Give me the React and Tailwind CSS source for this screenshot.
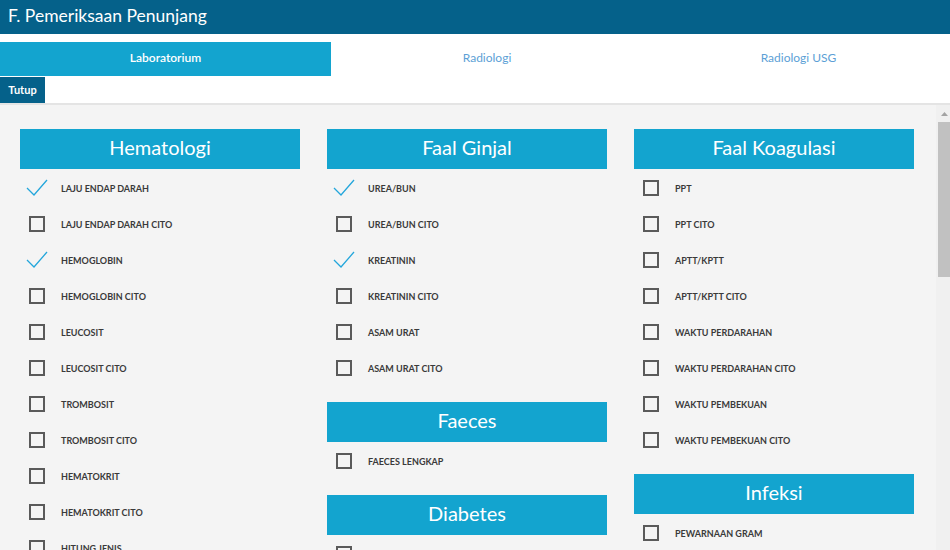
import React from 'react';

const columns = [
    [
        {
            title: 'Hematologi',
            items: [
                ['LAJU ENDAP DARAH', true],
                ['LAJU ENDAP DARAH CITO'],
                ['HEMOGLOBIN', true],
                ['HEMOGLOBIN CITO'],
                ['LEUCOSIT'],
                ['LEUCOSIT CITO'],
                ['TROMBOSIT'],
                ['TROMBOSIT CITO'],
                ['HEMATOKRIT'],
                ['HEMATOKRIT CITO'],
                ['HITUNG JENIS'],
                ['HITUNG JENIS CITO'],
                ['ERITROSIT'],
                ['ERITROSIT CITO'],
                ['GOLONGAN DARAH'],
                ['GOLONGAN DARAH CITO'],
            ],
        },
        {
            title: 'Urinalisa',
            items: [['URIN LENGKAP'], ['URIN LENGKAP CITO'], ['TES KEHAMILAN'], ['TES KEHAMILAN CITO']],
        },
        {
            title: 'Elektrolit',
            items: [['NATRIUM'], ['NATRIUM CITO'], ['KALIUM'], ['KALIUM CITO'], ['KLORIDA'], ['KLORIDA CITO'], ['KALSIUM']],
        },
    ],
    [
        {
            title: 'Faal Ginjal',
            items: [
                ['UREA/BUN', true],
                ['UREA/BUN CITO'],
                ['KREATININ', true],
                ['KREATININ CITO'],
                ['ASAM URAT'],
                ['ASAM URAT CITO'],
            ],
        },
        { title: 'Faeces', items: [['FAECES LENGKAP']] },
        {
            title: 'Diabetes',
            items: [['GULA DARAH SEWAKTU'], ['GULA DARAH SEWAKTU CITO'], ['GULA DARAH PUASA'], ['GULA DARAH 2 JAM PP'], ['HBA1C']],
        },
    ],
    [
        {
            title: 'Faal Koagulasi',
            items: [
                ['PPT'],
                ['PPT CITO'],
                ['APTT/KPTT'],
                ['APTT/KPTT CITO'],
                ['WAKTU PERDARAHAN'],
                ['WAKTU PERDARAHAN CITO'],
                ['WAKTU PEMBEKUAN'],
                ['WAKTU PEMBEKUAN CITO'],
            ],
        },
        {
            title: 'Infeksi',
            items: [['PEWARNAAN GRAM'], ['WIDAL'], ['HBSAG'], ['ANTI HIV']],
        },
    ],
];

const CheckItem = ({ label, checked }) => (
    <label className="flex items-center h-[36px] pl-[9px] gap-[16px] cursor-pointer">
        <span className="w-[16px] h-[16px] shrink-0 flex items-center justify-center">
            {checked ? (
                <svg width="22" height="18" viewBox="0 0 22 18" className="shrink-0" fill="none">
                    <polyline points="1,9 8,16 21,1" stroke="#23a6db" strokeWidth="1.3" />
                </svg>
            ) : (
                <span className="w-[16px] h-[16px] border-2 border-[#5a5a5a] block" />
            )}
        </span>
        <span className="text-[9px] font-bold text-[#3a3a3a] pt-[2px]">{label}</span>
    </label>
);

const Section = ({ title, items }) => (
    <div>
        <div className="h-[40px] bg-[#13a4cf] text-white text-[20px] flex items-center justify-center pb-[4px] mb-[1px]">
            {title}
        </div>
        {items.map(([label, checked]) => (
            <CheckItem key={label} label={label} checked={checked} />
        ))}
    </div>
);

// static scrollbar, drawn because the page's own scrollbar is hidden
const ScrollBar = () => (
    <div className="w-[14px] shrink-0 bg-[#f0f0f0] flex flex-col">
        <div className="h-[17px] flex items-center justify-center pl-[2px]">
            <svg width="7" height="4" viewBox="0 0 7 4">
                <polygon points="0,4 3.5,0 7,4" fill="#a3a3a3" />
            </svg>
        </div>
        <div className="h-[155px] ml-[2px] bg-[#c1c1c1]" />
    </div>
);

const App = () => {
    return (
        <div className="w-full h-screen flex flex-col bg-white overflow-hidden" style={{ fontFamily: 'Lato, "Open Sans", sans-serif' }}>
            <div className="h-[34px] shrink-0 bg-[#05618a] text-white text-[17.5px] flex items-center px-[8px] pb-[2px]">
                F. Pemeriksaan Penunjang
            </div>

            <div className="mt-[8px] flex h-[34px] shrink-0 text-[12px]">
                <div className="w-[331px] bg-[#13a4cf] text-white font-semibold flex items-center justify-center pb-[2px]">
                    Laboratorium
                </div>
                <div className="w-[312px] text-[#5c9fd6] flex items-center justify-center pb-[2px]">Radiologi</div>
                <div className="flex-1 text-[#5c9fd6] flex items-center justify-center pb-[2px] pl-[4px]">Radiologi USG</div>
            </div>

            <div className="h-[27px] shrink-0">
                <button className="h-full w-[45px] bg-[#05618a] text-white text-[11px] font-bold">Tutup</button>
            </div>

            <div className="h-[2px] shrink-0 bg-[#e4e4e4]" />

            <div className="flex-1 min-h-0 flex bg-[#f4f4f4]">
                <div className="flex-1 overflow-hidden">
                    <div className="grid grid-cols-[280px_280px_280px] gap-x-[27px] px-[20px] pt-[24px] pb-[24px] items-start">
                        {columns.map((sections, i) => (
                            <div key={i} className="flex flex-col gap-[16px]">
                                {sections.map((s) => (
                                    <Section key={s.title} title={s.title} items={s.items} />
                                ))}
                            </div>
                        ))}
                    </div>
                </div>
                <ScrollBar />
            </div>
        </div>
    );
};

export default App;
